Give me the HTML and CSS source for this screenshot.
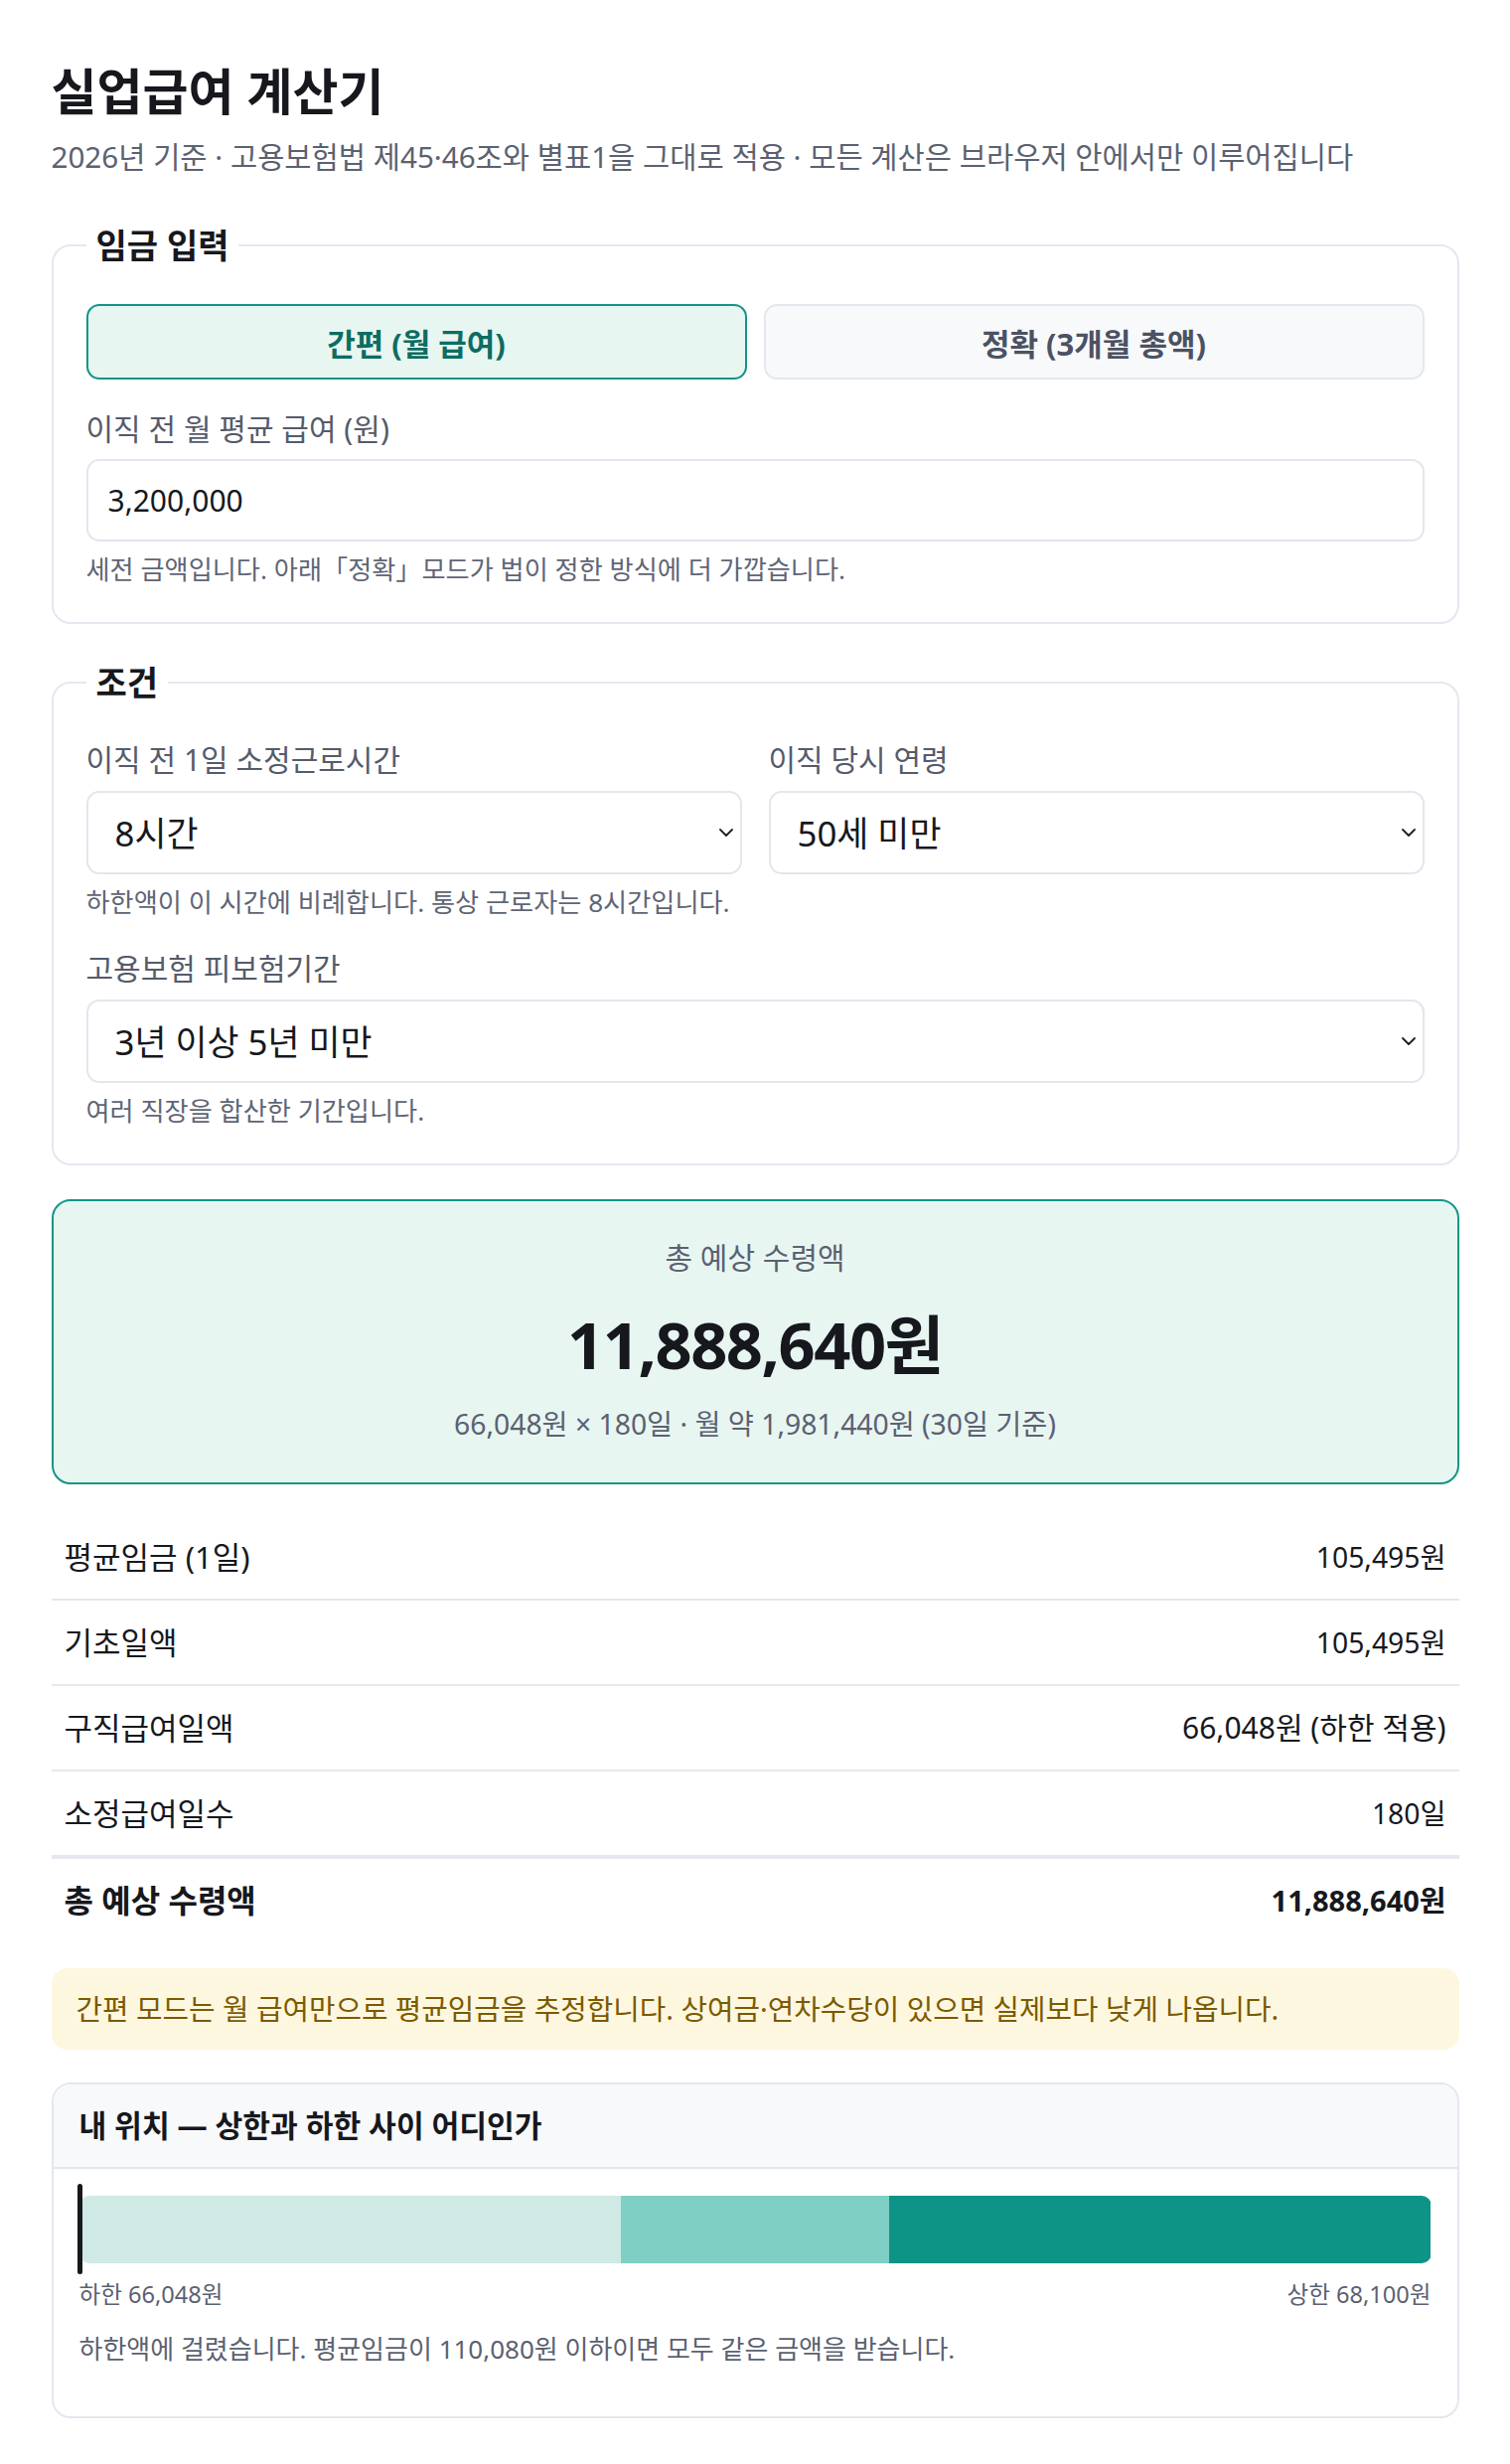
FILE: index.html
```html
<!DOCTYPE html>
<html lang="ko">
<head>
<meta charset="utf-8">
<title>실업급여 계산기</title>
<link rel="stylesheet" href="styles.css">
</head>
<body>
<main class="page">
  <h1 class="title">실업급여 계산기</h1>
  <p class="subtitle">2026년 기준 · 고용보험법 제45·46조와 별표1을 그대로 적용 · 모든 계산은 브라우저 안에서만 이루어집니다</p>

  <fieldset class="panel">
    <legend class="panel-legend">임금 입력</legend>
    <div class="mode-toggle">
      <button class="mode-btn is-active" type="button">간편 (월 급여)</button>
      <button class="mode-btn" type="button">정확 (3개월 총액)</button>
    </div>
    <div class="field field-spaced">
      <label class="field-label" for="wage">이직 전 월 평균 급여 (원)</label>
      <input id="wage" class="text-input" type="text" value="3,200,000">
      <p class="field-help">세전 금액입니다. 아래「정확」모드가 법이 정한 방식에 더 가깝습니다.</p>
    </div>
  </fieldset>

  <fieldset class="panel panel-next">
    <legend class="panel-legend">조건</legend>
    <div class="field-row">
      <div class="field">
        <label class="field-label" for="hours">이직 전 1일 소정근로시간</label>
        <div class="select-wrap">
          <select id="hours" class="select-input">
            <option>8시간</option>
          </select>
          <svg class="chevron" width="14" height="8" viewBox="0 0 14 8" aria-hidden="true"><path d="M1 1l6 6 6-6" fill="none" stroke="#1d1f24" stroke-width="1.8" stroke-linecap="round" stroke-linejoin="round"/></svg>
        </div>
        <p class="field-help">하한액이 이 시간에 비례합니다. 통상 근로자는 8시간입니다.</p>
      </div>
      <div class="field">
        <label class="field-label" for="age">이직 당시 연령</label>
        <div class="select-wrap">
          <select id="age" class="select-input">
            <option>50세 미만</option>
          </select>
          <svg class="chevron" width="14" height="8" viewBox="0 0 14 8" aria-hidden="true"><path d="M1 1l6 6 6-6" fill="none" stroke="#1d1f24" stroke-width="1.8" stroke-linecap="round" stroke-linejoin="round"/></svg>
        </div>
      </div>
    </div>
    <div class="field field-spaced">
      <label class="field-label" for="period">고용보험 피보험기간</label>
      <div class="select-wrap">
        <select id="period" class="select-input">
          <option>3년 이상 5년 미만</option>
        </select>
        <svg class="chevron" width="14" height="8" viewBox="0 0 14 8" aria-hidden="true"><path d="M1 1l6 6 6-6" fill="none" stroke="#1d1f24" stroke-width="1.8" stroke-linecap="round" stroke-linejoin="round"/></svg>
      </div>
      <p class="field-help">여러 직장을 합산한 기간입니다.</p>
    </div>
  </fieldset>

  <section class="result">
    <div class="result-label">총 예상 수령액</div>
    <div class="result-amount">11,888,640원</div>
    <div class="result-detail">66,048원 × 180일 · 월 약 1,981,440원 (30일 기준)</div>
  </section>

  <table class="breakdown">
    <tbody>
      <tr><td>평균임금 (1일)</td><td class="num">105,495원</td></tr>
      <tr><td>기초일액</td><td class="num">105,495원</td></tr>
      <tr><td>구직급여일액</td><td class="num num-mixed">66,048원 (하한 적용)</td></tr>
      <tr><td>소정급여일수</td><td class="num">180일</td></tr>
      <tr class="total"><td>총 예상 수령액</td><td class="num">11,888,640원</td></tr>
    </tbody>
  </table>

  <p class="notice">간편 모드는 월 급여만으로 평균임금을 추정합니다. 상여금·연차수당이 있으면 실제보다 낮게 나옵니다.</p>

  <section class="position-card">
    <h2 class="position-head">내 위치 — 상한과 하한 사이 어디인가</h2>
    <div class="position-body">
      <div class="range">
        <div class="range-track">
          <span class="seg seg-low" style="width:40.06%"></span>
          <span class="seg seg-mid" style="width:19.88%"></span>
          <span class="seg seg-high" style="width:40.06%"></span>
        </div>
        <span class="range-marker" style="left:0%"></span>
      </div>
      <div class="range-labels">
        <span>하한 66,048원</span>
        <span>상한 68,100원</span>
      </div>
      <p class="position-note">하한액에 걸렸습니다. 평균임금이 110,080원 이하이면 모두 같은 금액을 받습니다.</p>
    </div>
  </section>
</main>
</body>
</html>
```

FILE: styles.css
```css
* {
  box-sizing: border-box;
}

html,
body {
  margin: 0;
  padding: 0;
  background: #ffffff;
}

body {
  font-family: "Noto Sans", "Noto Sans CJK KR", sans-serif;
  color: #16181d;
}

.page {
  width: 1417px;
  margin: 0 auto;
  padding: 64px 0 44px;
}

.title {
  margin: 0;
  font-size: 50px;
  line-height: 56px;
  font-weight: 700;
  color: #16181d;
}

.subtitle {
  margin: 18px 0 0;
  font-size: 29.6px;
  line-height: 40px;
  color: #5b6171;
}

/* fieldsets */
.panel {
  margin: 49px 0 0;
  padding: 39px 33px 36px;
  border: 2px solid #e4e7ef;
  border-radius: 19px;
  min-inline-size: 0;
}

.panel-next {
  margin-top: 39px;
}

.panel-legend {
  padding: 0 10px;
  font-size: 34px;
  line-height: 40px;
  font-weight: 700;
  color: #16181d;
}

.mode-toggle {
  display: grid;
  grid-template-columns: 1fr 1fr;
  gap: 17px;
}

.mode-btn {
  height: 76px;
  margin: 0;
  padding: 0;
  border: 2px solid #e4e7ef;
  border-radius: 13px;
  background: #f8f9fb;
  font-family: "Noto Sans", "Noto Sans CJK KR", sans-serif;
  font-size: 31px;
  font-weight: 700;
  color: #4b5263;
}

.mode-btn.is-active {
  background: #e8f6f2;
  border-color: #119585;
  color: #0c6d61;
}

.field-spaced {
  margin-top: 31px;
}

.field-label {
  display: block;
  font-size: 30px;
  line-height: 38px;
  color: #555b6b;
}

.text-input {
  display: block;
  width: 100%;
  height: 83px;
  margin: 11px 0 0;
  padding: 0 20px;
  border: 2px solid #e3e6ee;
  border-radius: 13px;
  background: #ffffff;
  font-family: "Noto Sans", "Noto Sans CJK KR", sans-serif;
  font-size: 30px;
  color: #16181d;
  outline: none;
}

.field-help {
  margin: 11px 0 0;
  font-size: 26.2px;
  line-height: 34px;
  color: #5f6575;
}

.field-row {
  display: grid;
  grid-template-columns: 1fr 1fr;
  gap: 27px;
}

.select-wrap {
  position: relative;
  margin-top: 12px;
}

.select-input {
  display: block;
  width: 100%;
  height: 84px;
  margin: 0;
  padding: 0 40px 0 27px;
  border: 2px solid #e3e6ee;
  border-radius: 13px;
  background: #ffffff;
  font-family: "Noto Sans", "Noto Sans CJK KR", sans-serif;
  font-size: 34.8px;
  color: #16181d;
  appearance: none;
  -webkit-appearance: none;
  outline: none;
}

.chevron {
  position: absolute;
  right: 9px;
  top: 38px;
  pointer-events: none;
}

/* result */
.result {
  margin-top: 34px;
  padding: 38px 24px 40px;
  border: 2px solid #139686;
  border-radius: 19px;
  background: #e8f6f2;
  text-align: center;
}

.result-label {
  font-size: 30px;
  line-height: 38px;
  color: #5b6171;
}

.result-amount {
  margin-top: 30px;
  font-size: 65px;
  line-height: 76px;
  font-weight: 700;
  letter-spacing: -1.5px;
  color: #16181d;
}

.result-detail {
  margin-top: 23px;
  font-size: 28.3px;
  line-height: 38px;
  color: #5b6171;
}

/* breakdown table */
.breakdown {
  width: 100%;
  margin-top: 31px;
  border-collapse: collapse;
}

.breakdown td {
  padding: 21px 13px;
  font-size: 31px;
  line-height: 42px;
  color: #16181d;
  border-bottom: 2px solid #e6e8ef;
}

.breakdown .num {
  text-align: right;
  font-size: 28.3px;
}

.breakdown .num-mixed {
  font-size: 30px;
}

.breakdown .total td {
  font-weight: 700;
  font-size: 32px;
  border-top: 4px solid #e4e7ef;
  border-bottom: none;
}

.breakdown .total .num {
  font-size: 29px;
}

/* notice */
.notice {
  margin: 26px 0 0;
  padding: 22px 25px;
  border-radius: 16px;
  background: #fef7df;
  font-size: 28.8px;
  line-height: 38px;
  color: #7b5a00;
}

/* position card */
.position-card {
  margin-top: 33px;
  border: 2px solid #e4e7ef;
  border-radius: 19px;
  overflow: hidden;
}

.position-head {
  margin: 0;
  padding: 22px 26px 21px;
  background: #f8f9fb;
  border-bottom: 2px solid #e4e7ef;
  font-size: 30.2px;
  line-height: 40px;
  font-weight: 700;
  color: #16181d;
}

.position-body {
  padding: 27px 26px 51px;
}

.range {
  position: relative;
}

.range-track {
  display: flex;
  height: 68px;
  border-radius: 10px;
  overflow: hidden;
}

.seg {
  display: block;
  height: 100%;
}

.seg-low {
  background: #cfe9e4;
}

.seg-mid {
  background: #80cfc4;
}

.seg-high {
  background: #0e9486;
}

.range-marker {
  position: absolute;
  top: -12px;
  bottom: -11px;
  width: 5px;
  margin-left: -2px;
  border-radius: 3px;
  background: #16181d;
}

.range-labels {
  display: flex;
  justify-content: space-between;
  margin-top: 16px;
  font-size: 23.6px;
  line-height: 30px;
  color: #5b6171;
}

.position-note {
  margin: 23px 0 0;
  font-size: 26px;
  line-height: 34px;
  color: #5b6171;
}
```
